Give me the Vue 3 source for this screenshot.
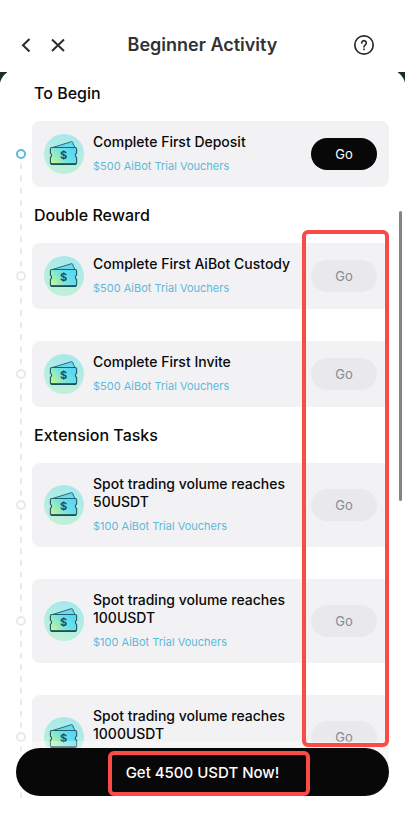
<script setup>
const sections = [
  {
    title: 'To Begin',
    tasks: [
      { name: 'Complete First Deposit', reward: '$500 AiBot Trial Vouchers', active: true, reach: 89 },
    ],
  },
  {
    title: 'Double Reward',
    tasks: [
      { name: 'Complete First AiBot Custody', reward: '$500 AiBot Trial Vouchers', reach: 65 },
      { name: 'Complete First Invite', reward: '$500 AiBot Trial Vouchers', reach: 98 },
    ],
  },
  {
    title: 'Extension Tasks',
    tasks: [
      { name: 'Spot trading volume reaches 50USDT', reward: '$100 AiBot Trial Vouchers', reach: 74 },
      { name: 'Spot trading volume reaches 100USDT', reward: '$100 AiBot Trial Vouchers', reach: 74 },
      { name: 'Spot trading volume reaches 1000USDT', reward: '', reach: 74 },
    ],
  },
]
</script>

<template>
  <div class="page">
    <header class="bar">
      <div class="nav">
        <button class="icon-btn" type="button" aria-label="Back">
          <svg width="14" height="18" viewBox="0 0 14 18"><path d="M10.500 3 4 9.200l6.500 6.300" /></svg>
        </button>
        <button class="icon-btn" type="button" aria-label="Close">
          <svg width="18" height="18" viewBox="0 0 18 18"><path d="m3 3.500 12 11.500M15 3.500 3 15" /></svg>
        </button>
      </div>
      <h1>Beginner Activity</h1>
      <button class="icon-btn help" type="button" aria-label="Help">
        <svg width="22" height="22" viewBox="0 0 22 22">
          <circle cx="11" cy="11" r="9.200" />
          <path d="M8.700 9a2.300 2.300 0 1 1 3.600 1.900c-.9.6-1.300 1-1.300 1.900" />
          <path d="M11 15.200v.3" />
        </svg>
      </button>
    </header>

    <main class="panel">
      <section v-for="section in sections" :key="section.title">
        <h2>{{ section.title }}</h2>
        <ul class="tasks">
          <li v-for="task in section.tasks" :key="task.name" class="task">
            <span class="line" :style="{ bottom: -task.reach + 'px' }"></span>
            <span class="rail"><span class="dot" :class="{ on: task.active }"></span></span>
            <div class="card">
              <svg class="voucher" width="40" height="40" viewBox="0 0 40 40" aria-hidden="true">
                <defs>
                  <linearGradient id="disc" x1="0.7" y1="0" x2="0.4" y2="1">
                    <stop offset="0" stop-color="#a6e8ee" />
                    <stop offset="1" stop-color="#c1f1d6" />
                  </linearGradient>
                  <linearGradient id="ticket" x1="0" y1="0.8" x2="1" y2="0.3">
                    <stop offset="0" stop-color="#c5f58f" />
                    <stop offset="0.5" stop-color="#74e3e0" />
                    <stop offset="1" stop-color="#55d6f5" />
                  </linearGradient>
                </defs>
                <circle cx="20" cy="20" r="20" fill="url(#disc)" />
                <path d="M8.500 13.500 27.500 7.700q1-.2 1.300.8l.4 1.500q-.2 1.300 1 1.500l.5 2z" fill="#68dcee" stroke="#266a7c" stroke-width="1" stroke-linejoin="round" />
                <path d="M7.800 13.500h23.400q1.400 0 1.400 1.400v4.300q-1.200.6-1.200 2.100t1.200 2.100v5q0 1.400-1.400 1.400H7.800q-1.400 0-1.400-1.400v-5q1.200-.6 1.200-2.100t-1.200-2.100v-4.300q0-1.400 1.400-1.400z" fill="url(#ticket)" stroke="#24616d" stroke-width="1.200" />
                <path d="M6.800 29.400q.4.800 1.500.8h22.400q1.100 0 1.500-.8" fill="none" stroke="#1d4e60" stroke-width="1.600" />
                <text x="19.500" y="25.200" text-anchor="middle">$</text>
              </svg>
              <div class="copy">
                <h3>{{ task.name }}</h3>
                <p>{{ task.reward }}</p>
              </div>
              <button class="go" type="button" :disabled="!task.active">Go</button>
            </div>
          </li>
        </ul>
      </section>
    </main>

    <footer class="footer">
      <button class="cta" type="button">Get 4500 USDT Now!</button>
    </footer>

    <span class="thumb"></span>
    <span class="mark mark-column"></span>
    <span class="mark mark-cta"></span>
  </div>
</template>

<style>
body {
  background: #fff;
}
</style>

<style scoped>
.page {
  position: relative;
  display: flex;
  flex-direction: column;
  height: 100vh;
  padding-bottom: 20px;
  box-sizing: border-box;
  overflow: hidden;
  background: #fff;
  color: #0a0a0a;
  font-family: Inter, "Liberation Sans", sans-serif;
}

h1,
h2,
h3,
p,
ul {
  margin: 0;
  padding: 0;
}

button {
  border: 0;
  padding: 0;
  font: inherit;
}

.bar {
  flex: none;
  display: grid;
  grid-template-columns: 1fr auto 1fr;
  align-items: center;
  height: 72px;
  padding: 18px 19px 0;
  box-sizing: border-box;
}

.nav {
  display: flex;
  gap: 16px;
}

.icon-btn {
  display: flex;
  background: none;
}

.icon-btn svg {
  fill: none;
  stroke: #2a2c30;
  stroke-width: 2;
}

.help {
  justify-self: end;
  margin-right: 11px;
}

.help svg {
  stroke-width: 1.7;
  stroke-linecap: round;
}

h1 {
  color: #303236;
  font-size: 18px;
  line-height: 24px;
  font-weight: 600;
}

.panel {
  flex: 1;
  min-height: 0;
  overflow: hidden;
  padding: 0 16px;
  background:
    radial-gradient(circle at 17px 15px, #fff 17px, #1b2c2e 18px) 0 0 / 7px 15px no-repeat,
    radial-gradient(circle at -10px 15px, #fff 17px, #1b2c2e 18px) 100% 0 / 7px 15px no-repeat;
}

h2 {
  padding: 16px 0 16px 18px;
  font-size: 16px;
  line-height: 24px;
  font-weight: 500;
}

section:first-child h2 {
  padding-top: 9px;
}

.tasks {
  display: grid;
  gap: 32px;
  list-style: none;
}

.task {
  position: relative;
  display: flex;
}

.line {
  position: absolute;
  left: 4px;
  top: 50%;
  width: 2px;
  background: linear-gradient(#e9e9ea 3px, transparent 3px 9px, #e9e9ea 9px) 0 0 / 2px 12px round;
}

.rail {
  position: relative;
  flex: none;
  display: flex;
  align-items: center;
  width: 16px;
}

.dot {
  width: 10px;
  height: 10px;
  box-sizing: border-box;
  border: 2px solid #e9e9ea;
  border-radius: 50%;
  background: #fff;
}

.dot.on {
  border-color: #5cb9d9;
}

.card {
  flex: 1;
  display: flex;
  align-items: center;
  gap: 9px;
  min-width: 0;
  padding: 12px;
  border-radius: 8px;
  background: #f2f2f4;
}

.voucher {
  flex: none;
}

.voucher text {
  fill: #1d4e60;
  font-size: 11px;
  font-weight: 700;
}

.copy {
  flex: 1;
  min-width: 0;
}

h3 {
  font-size: 14px;
  line-height: 18px;
  font-weight: 500;
  margin-right: -8px;
}

p {
  min-height: 18px;
  margin-top: 6px;
  color: #5cb9d9;
  font-size: 11px;
  line-height: 18px;
}

.go {
  flex: none;
  width: 66px;
  height: 32px;
  border-radius: 16px;
  background: #080808;
  color: #fff;
  font-size: 13px;
}

.go:disabled {
  background: #e9e9eb;
  color: #858a93;
}

.footer {
  position: absolute;
  left: 0;
  right: 0;
  bottom: 22px;
  padding: 7px 16px 0;
  background: rgba(255, 255, 255, 0.3);
}

.cta {
  display: block;
  width: 100%;
  height: 48px;
  border-radius: 24px;
  background: #080808;
  color: #fff;
  font-size: 15px;
  font-weight: 500;
}

.thumb {
  position: absolute;
  top: 211px;
  right: 3px;
  width: 3px;
  height: 290px;
  border-radius: 2px;
  background: #858585;
}

.mark {
  position: absolute;
  box-sizing: border-box;
  border: 4px solid #fb4b46;
  border-radius: 6px;
  pointer-events: none;
}

.mark-column {
  top: 230px;
  right: 16px;
  bottom: 71px;
  width: 87px;
}

.mark-cta {
  right: 95px;
  bottom: 22px;
  width: 202px;
  height: 45px;
}
</style>
